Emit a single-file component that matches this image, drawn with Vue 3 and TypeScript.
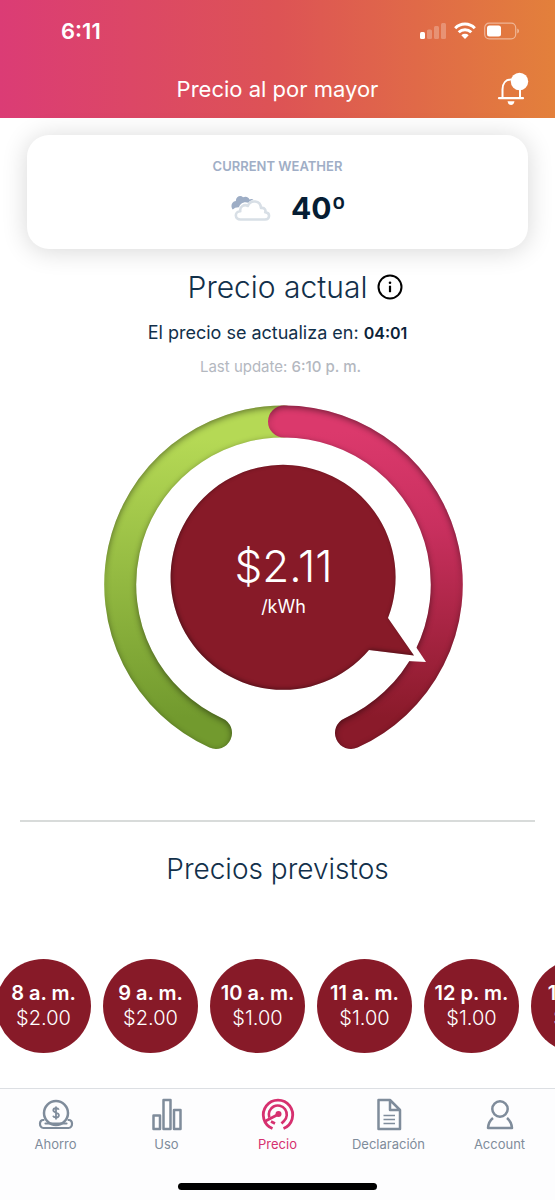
<script setup lang="ts">
interface Forecast {
  hour: string
  price: string
}

interface Tab {
  id: string
  label: string
}

const forecasts: Forecast[] = [
  { hour: '8 a. m.', price: '$2.00' },
  { hour: '9 a. m.', price: '$2.00' },
  { hour: '10 a. m.', price: '$1.00' },
  { hour: '11 a. m.', price: '$1.00' },
  { hour: '12 p. m.', price: '$1.00' },
  { hour: '1 p. m.', price: '$1.00' },
]

const tabs: Tab[] = [
  { id: 'savings', label: 'Ahorro' },
  { id: 'usage', label: 'Uso' },
  { id: 'price', label: 'Precio' },
  { id: 'statement', label: 'Declaración' },
  { id: 'account', label: 'Account' },
]

const activeTab = 'price'
</script>

<template>
  <div class="app">
    <header class="top">
      <div class="status">
        <span class="clock">6:11</span>
        <svg class="status-icons" viewBox="0 0 100 18" aria-hidden="true">
          <rect x="0" y="10" width="5" height="7" rx="1.5" fill="#fff" />
          <g fill="#fff" opacity="0.25">
            <rect x="7" y="7.500" width="5" height="9.500" rx="1.500" />
            <rect x="14" y="4" width="5" height="13" rx="1.500" />
            <rect x="21" y="1" width="5" height="16" rx="1.500" />
          </g>
          <g fill="none" stroke="#fff" stroke-width="3">
            <path d="M35.200 6.200a13.800 13.800 0 0 1 19.600 0" />
            <path d="M38.700 10.200a9 9 0 0 1 12.600 0" />
          </g>
          <path d="M41.300 13.200a5.400 5.400 0 0 1 7.400 0L45 17z" fill="#fff" />
          <rect x="64.700" y="1.200" width="31" height="15.600" rx="4.500" fill="none" stroke="#fff" stroke-opacity="0.450" stroke-width="1.200" />
          <rect x="67" y="3.500" width="14" height="11" rx="2.500" fill="#fff" />
          <path d="M97.300 6.500v5q1.700-.8 1.700-2.500t-1.700-2.500z" fill="#fff" opacity="0.5" />
        </svg>
      </div>
      <div class="title-bar">
        <h1>Precio al por mayor</h1>
        <button class="bell" type="button" aria-label="Notificaciones">
          <svg viewBox="0 0 34 34" aria-hidden="true">
            <path d="M7.500 26V17.500C7.500 11 11 7.500 16 7.500S25 11 25 17.500V26" fill="none" stroke="#fff" stroke-width="2" />
            <path d="M4 26.200H28" stroke="#fff" stroke-width="2.200" stroke-linecap="round" />
            <path d="M12.500 29.300h7q-.6 3.700-3.500 3.700t-3.500-3.700z" fill="#fff" />
            <circle cx="24.500" cy="9.500" r="8.700" fill="#fff" />
          </svg>
        </button>
      </div>
    </header>

    <main>
      <section class="weather">
        <h2>CURRENT WEATHER</h2>
        <div class="weather-row">
          <svg viewBox="0 0 40 28" aria-hidden="true">
            <path d="M1.800 15.500C-.8 12.500.5 7.500 4.800 7C5 2.500 9.500.8 12 3.200C15.500 1.500 18.500 4 18.300 5.500Q21 4.300 22.500 6Q19 6 17.500 8.800C13 7 9 9.500 8 13.200Q4 13 1.800 15.500z" fill="#9dadc5" />
            <path d="M9.500 25.500C3.500 25.500 3.200 17.500 9.300 17.300C8.300 12.500 13.500 9.700 16.800 12C19.500 5.300 29.500 6.200 30 14C34 13.200 35 16.500 34.200 18.200C39.500 18.500 39.200 25.500 34 25.500z" fill="#fff" stroke="#d8dfe6" stroke-width="2.600" stroke-linejoin="round" />
          </svg>
          <span class="temp">40º</span>
        </div>
      </section>

      <section class="current">
        <div class="heading">
          <h2>Precio actual</h2>
          <button type="button" aria-label="Información">
            <svg viewBox="0 0 26 26" aria-hidden="true">
              <circle cx="13" cy="13" r="11.500" fill="none" stroke="#000" stroke-width="2" />
              <circle cx="13" cy="8.800" r="1.300" />
              <path d="M13 11.700v6.500" stroke="#000" stroke-width="2.200" />
            </svg>
          </button>
        </div>
        <p class="countdown">El precio se actualiza en: <b>04:01</b></p>
        <p class="updated">Last update: <b>6:10 p. m.</b></p>

        <div class="gauge">
          <svg viewBox="0 0 360 348" aria-hidden="true">
            <defs>
              <linearGradient id="low" gradientUnits="userSpaceOnUse" x1="0" y1="0" x2="0" y2="348">
                <stop offset="0.100" stop-color="#b5d955" />
                <stop offset="0.900" stop-color="#729a2e" />
              </linearGradient>
              <linearGradient id="high" gradientUnits="userSpaceOnUse" x1="0" y1="0" x2="0" y2="348">
                <stop offset="0.080" stop-color="#db396c" />
                <stop offset="0.350" stop-color="#c9305f" />
                <stop offset="0.900" stop-color="#8a1a2a" />
              </linearGradient>
              <filter id="ring-shade" x="-10%" y="-10%" width="120%" height="120%" color-interpolation-filters="sRGB">
                <feFlood flood-color="#000" flood-opacity="0.450" result="ink" />
                <feComposite in="ink" in2="SourceAlpha" operator="out" result="outside" />
                <feGaussianBlur in="outside" stdDeviation="3" />
                <feOffset dx="0" dy="2" />
                <feComposite in2="SourceAlpha" operator="in" result="shade" />
                <feMerge>
                  <feMergeNode in="SourceGraphic" />
                  <feMergeNode in="shade" />
                </feMerge>
              </filter>
              <filter id="disc-shade" x="-10%" y="-10%" width="120%" height="120%" color-interpolation-filters="sRGB">
                <feFlood flood-color="#000" flood-opacity="0.400" result="ink" />
                <feComposite in="ink" in2="SourceAlpha" operator="out" result="outside" />
                <feGaussianBlur in="outside" stdDeviation="2" />
                <feOffset dx="1" dy="-1" />
                <feComposite in2="SourceAlpha" operator="in" result="shade" />
                <feMerge>
                  <feMergeNode in="SourceGraphic" />
                  <feMergeNode in="shade" />
                </feMerge>
              </filter>
            </defs>
            <g fill="none" stroke-width="32" stroke-linecap="round">
              <path d="M180 17.500A163 163 0 0 0 112 329" stroke="url(#low)" filter="url(#ring-shade)" />
              <path d="M180 17.500A163 163 0 0 1 247 329" stroke="url(#high)" filter="url(#ring-shade)" />
            </g>
            <path d="M322 258L302 228L284 214L265 246L303 257z" fill="#fff" />
            <path d="M284 214L310 251.500L265 246A112.500 112.500 0 1 1 284 214z" fill="#871a28" filter="url(#disc-shade)" />
          </svg>
          <div class="reading">
            <strong>$2.11</strong>
            <span>/kWh</span>
          </div>
        </div>
      </section>

      <section class="forecast">
        <h2>Precios previstos</h2>
        <ul>
          <li v-for="item in forecasts" :key="item.hour">
            <b>{{ item.hour }}</b>
            <span>{{ item.price }}</span>
          </li>
        </ul>
      </section>
    </main>

    <nav>
      <div class="tabs">
        <a v-for="tab in tabs" :key="tab.id" href="#" :class="{ active: tab.id === activeTab }">
          <svg viewBox="0 0 36 34" fill="none" stroke="currentColor" stroke-width="2.500" stroke-linejoin="round" aria-hidden="true">
            <template v-if="tab.id === 'savings'">
              <circle cx="18" cy="15" r="12" />
              <path d="M5.500 22C.8 21.500.8 30 5.500 30H30.500C35.200 30 35.200 21.500 30.500 22M7.500 25.500H28.500" stroke-width="2.200" stroke-linecap="round" />
              <path d="M20.800 11.800C20 9.700 15.300 9.600 15.300 12.300C15.300 15.200 20.900 14.200 20.900 17.300C20.900 20.300 15.700 20 15 17.700M18 8.500V21.500" stroke-width="1.800" />
            </template>
            <template v-else-if="tab.id === 'usage'">
              <rect x="4.500" y="17.500" width="6.500" height="13.500" />
              <rect x="14.500" y="2" width="7" height="29" />
              <rect x="25" y="12" width="6.500" height="19" />
            </template>
            <template v-else-if="tab.id === 'price'">
              <path d="M12.500 30.500A14.700 14.700 0 1 1 23.500 30.500" stroke-width="2.800" />
              <path d="M9.300 19.500A9 9 0 1 1 24 23L21.500 25.500M11 23.500L15 25.500" stroke-width="2.600" />
              <path d="M18 16.500L6.500 22.500" stroke-width="2.800" stroke-linecap="round" />
              <circle cx="18.500" cy="16" r="3" fill="currentColor" stroke="none" />
            </template>
            <template v-else-if="tab.id === 'statement'">
              <path d="M7.500 2H19L29 12V31H7.500zM19 2V12H29" />
              <path d="M12.500 17.500H24M12.500 21.500H24M12.500 25.500H24" stroke-width="1.300" />
            </template>
            <template v-else>
              <circle cx="18" cy="11" r="7.700" />
              <path d="M11 20Q6.500 23.500 6 30H30Q29.500 23.500 25 20" />
            </template>
          </svg>
          <span>{{ tab.label }}</span>
        </a>
      </div>
      <div class="home-bar"></div>
    </nav>
  </div>
</template>

<style>
body {
  margin: 0;
}
</style>

<style scoped>
.app {
  display: flex;
  flex-direction: column;
  min-height: 100vh;
  overflow: hidden;
  background: #fff;
  color: #12304a;
  font-family: Inter, "Liberation Sans", sans-serif;
}

h1,
h2,
p,
ul {
  margin: 0;
  padding: 0;
  font-weight: 300;
}

button {
  padding: 0;
  border: 0;
  background: none;
}

svg {
  display: block;
}

.top {
  height: 118px;
  background: linear-gradient(90deg, #db3c75, #dd5355 50%, #e3803b);
  color: #fff;
}

.status {
  display: flex;
  align-items: center;
  justify-content: space-between;
  height: 60px;
  padding: 2px 35px 0 61px;
  box-sizing: border-box;
}

.clock {
  font-size: 22px;
  font-weight: 600;
}

.status-icons {
  width: 100px;
  height: 18px;
}

.title-bar {
  display: grid;
  grid-template-columns: 1fr auto 1fr;
  align-items: center;
  height: 58px;
  padding: 0 26px;
}

.title-bar h1 {
  grid-column: 2;
  font-size: 22px;
  font-weight: 400;
}

.bell {
  justify-self: end;
}

.bell svg {
  width: 34px;
  height: 34px;
}

main {
  flex: 1;
}

.weather {
  display: flex;
  flex-direction: column;
  align-items: center;
  gap: 12px;
  height: 114px;
  margin: 17px 27px 0;
  padding-top: 22px;
  box-sizing: border-box;
  border-radius: 22px;
  background: #fff;
  box-shadow: 0 2px 26px rgba(0, 0, 0, 0.16);
}

.weather h2 {
  color: #a0aec6;
  font-size: 13px;
  font-weight: 600;
  line-height: 18px;
}

.weather-row {
  display: flex;
  align-items: center;
  gap: 20px;
  padding-left: 22px;
}

.weather svg {
  width: 40px;
  height: 28px;
}

.temp {
  color: #061d33;
  font-size: 30px;
  font-weight: 700;
  line-height: 42px;
}

.current {
  display: flex;
  flex-direction: column;
  align-items: center;
  margin: 0 20px;
  padding: 20px 0 68px;
  border-bottom: 2px solid #d8dbda;
}

.heading {
  display: flex;
  align-items: center;
  gap: 10px;
  padding-left: 36px;
}

.heading h2,
.forecast h2 {
  font-size: 28px;
  line-height: 36px;
}

.heading h2 {
  font-size: 30px;
}

.heading svg {
  width: 26px;
  height: 26px;
}

.countdown {
  margin-top: 16px;
  font-size: 18px;
  font-weight: 400;
  line-height: 24px;
}

.countdown b {
  color: #0b2238;
  font-size: 16px;
  font-weight: 600;
}

.updated {
  margin-top: 12px;
  padding-left: 6px;
  color: #b4b8bf;
  font-size: 15px;
  font-weight: 400;
  line-height: 20px;
}

.updated b {
  font-weight: 500;
}

.gauge {
  display: grid;
  width: 360px;
  margin: 27px 0 0 12px;
}

.gauge > * {
  grid-area: 1 / 1;
}

.gauge svg {
  width: 100%;
}

.reading {
  display: flex;
  flex-direction: column;
  align-items: center;
  padding-top: 134px;
  color: #fff;
}

.reading strong {
  font-size: 44px;
  font-weight: 300;
  line-height: 56px;
}

.reading span {
  font-size: 18px;
  line-height: 26px;
}

.forecast {
  padding-top: 29px;
  text-align: center;
}

.forecast ul {
  display: flex;
  gap: 12px;
  margin-left: -4px;
  padding-top: 72px;
  list-style: none;
}

.forecast li {
  display: flex;
  flex: none;
  flex-direction: column;
  align-items: center;
  justify-content: center;
  width: 95px;
  height: 94px;
  border-radius: 50%;
  background: #871a28;
  color: #fff;
  font-size: 20px;
  line-height: 25px;
  white-space: nowrap;
}

.forecast b {
  font-weight: 600;
}

nav {
  padding-bottom: 10px;
  border-top: 1px solid #dcdfe3;
  background: #fdfdfe;
}

.tabs {
  display: grid;
  grid-template-columns: repeat(5, 1fr);
  height: 94px;
}

.tabs a {
  display: flex;
  flex-direction: column;
  align-items: center;
  gap: 3px;
  padding-top: 9px;
  color: #7f8c9b;
  font-size: 13px;
  line-height: 18px;
  text-decoration: none;
}

.tabs a.active {
  color: #d6306f;
}

.tabs svg {
  width: 36px;
  height: 34px;
}

.home-bar {
  width: 36%;
  height: 7px;
  margin: 0 auto;
  border-radius: 4px;
  background: #000;
}
</style>
